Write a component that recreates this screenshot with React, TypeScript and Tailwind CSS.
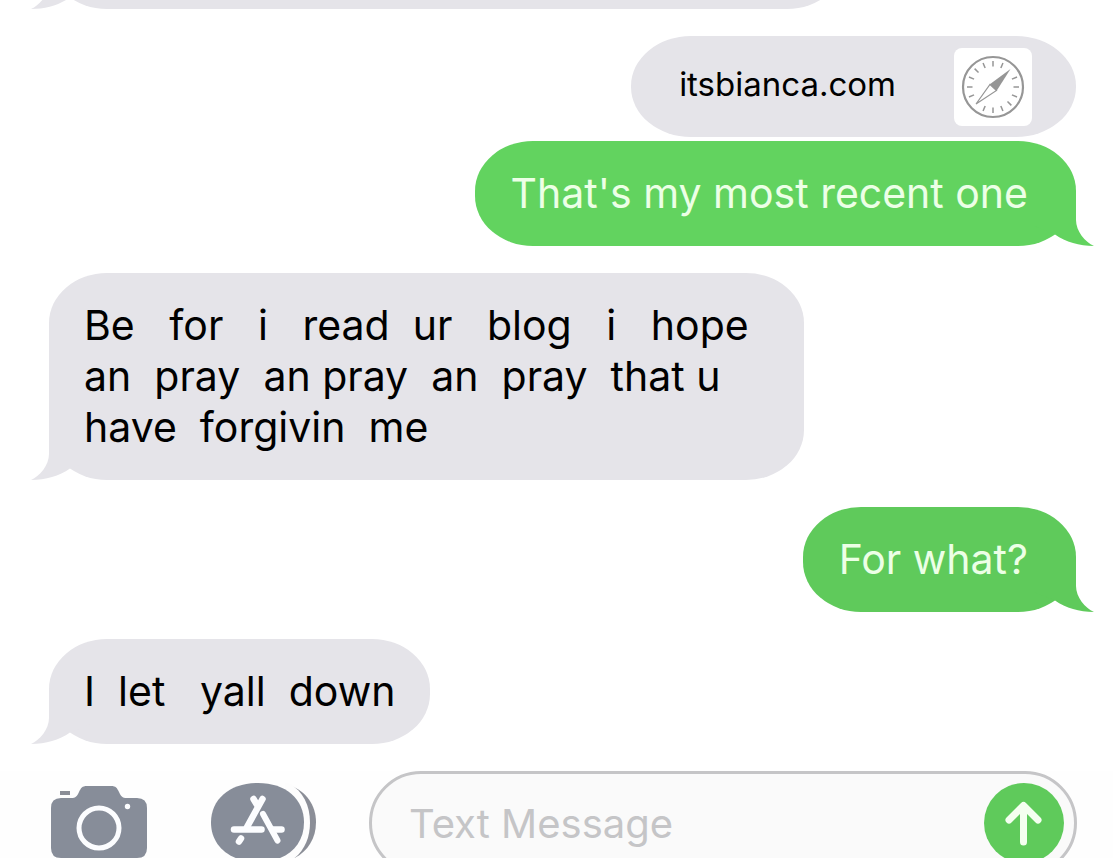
import React from 'react';

type Side = 'in' | 'out';

type BubbleProps = {
  side: Side;
  className?: string;
  children?: React.ReactNode;
};

function Tail({ side }: { side: Side }) {
  return (
    <svg
      viewBox="0 0 60 52"
      aria-hidden="true"
      className={
        side === 'in'
          ? 'absolute bottom-0 -left-[18px] h-[52px] w-[60px] fill-current'
          : 'absolute bottom-0 -right-[18px] h-[52px] w-[60px] -scale-x-100 fill-current'
      }
    >
      <path d="M18 0V26C18 37 9 48 0 52C15 52 28 48 39 40.500L60 32V0Z" />
    </svg>
  );
}

function Bubble({ side, className = '', children }: BubbleProps) {
  const tone = side === 'in' ? 'self-start text-[#e5e4e9]' : 'self-end';
  const inset = side === 'in' ? 'pr-[35px] pl-[35px]' : 'pr-12 pl-9';
  return (
    <div className={`relative ${tone} ${className}`}>
      <div className={`min-h-[105px] rounded-[58px/50px] bg-current py-[27px] ${inset}`}>
        <p
          className={
            side === 'in'
              ? 'relative z-10 text-[41px] leading-[51px] whitespace-pre text-black'
              : 'relative z-10 text-[41px] leading-[51px] whitespace-pre text-[#ecffe6]'
          }
        >
          {children}
        </p>
      </div>
      <Tail side={side} />
    </div>
  );
}

const ticks = Array.from({ length: 16 }, (_, i) => i * 22.5).filter((a) => a !== 45 && a !== 225);

function Compass() {
  return (
    <svg viewBox="-39 -39 78 78" className="size-[78px] rounded-lg bg-white" aria-hidden="true">
      <circle r="30" fill="none" stroke="#969696" strokeWidth="2.200" />
      {ticks.map((angle) => (
        <line key={angle} y1="-26" y2="-20.500" stroke="#969696" strokeWidth="1.500" transform={`rotate(${angle})`} />
      ))}
      <path d="M17.500 -18L-3.500 -2.500L3.500 4Z" fill="#969696" />
      <path d="M-17 17L-3 -2.500L3.500 3.500Z" fill="#fff" stroke="#969696" strokeWidth="1.200" />
    </svg>
  );
}

function CameraIcon() {
  return (
    <svg viewBox="0 0 96 74" className="h-[74px] w-24" aria-hidden="true">
      <rect x="9" y="5" width="10" height="4" fill="#8b8e97" />
      <path
        d="M10 12H20C25 12 26 10 28 6C30 2 31 0 36 0H60C65 0 66 2 68 6C70 10 71 12 76 12H86Q96 12 96 22V62Q96 72 86 72H10Q0 72 0 62V22Q0 12 10 12Z"
        fill="#878d99"
      />
      <circle cx="48" cy="42" r="20" fill="none" stroke="#fcfdff" strokeWidth="5" />
      <circle cx="76.500" cy="20.500" r="2.700" fill="#fcfdff" />
    </svg>
  );
}

function AppStoreIcon() {
  return (
    <svg viewBox="0 0 105 80" className="h-20 w-[105px]" aria-hidden="true">
      <path d="M79 2.500C95 8 105 22 105 39.500S95 71 79 77Z" fill="#8b8e97" />
      <path d="M74 -2C91 6 99 21 99 39.500S91 73 74 81Z" fill="#fdfdfd" />
      <path d="M47 0C75 0 93 16 93 39.500S75 79 47 79S0 63 0 39.500S19 0 47 0Z" fill="#878d99" />
      <g fill="none" stroke="#fcfdff" strokeWidth="6.500" strokeLinecap="round">
        <path d="M42.500 16L45.500 21" />
        <path d="M51.500 16L36 44" />
        <path d="M30 55.500L28 58.500" />
        <path d="M23 46.500H50.500" />
      </g>
      <path d="M51 29L67 58" fill="none" stroke="#878d99" strokeWidth="9.500" />
      <path d="M52 31L66.500 57.500" fill="none" stroke="#fcfdff" strokeWidth="6" strokeLinecap="round" />
      <path d="M62 46.500H70.500" stroke="#fcfdff" strokeWidth="6.500" strokeLinecap="round" />
    </svg>
  );
}

function ArrowUp() {
  return (
    <svg viewBox="0 0 80 80" className="size-20" aria-hidden="true">
      <path
        d="M39.500 59V23M25 37L39.500 22.500L54 37"
        fill="none"
        stroke="#f4fff0"
        strokeWidth="7"
        strokeLinecap="round"
        strokeLinejoin="round"
      />
    </svg>
  );
}

export default function App() {
  return (
    <main className="flex h-screen flex-col overflow-hidden bg-white font-[Inter,'Liberation_Sans',sans-serif]">
      <section aria-label="Conversation" className="flex shrink-0 flex-col gap-[27px] pr-[37px] pl-[49px]">
        <Bubble side="in" className="-mt-24 w-[796px]" />
        <div className="flex flex-col gap-1">
          <a
            href="https://itsbianca.com"
            className="flex h-[101px] items-center gap-[58px] self-end rounded-[60px/50px] bg-[#e5e4e9] pr-11 pl-12"
          >
            <span className="pb-1.5 text-[33px] leading-10 text-black">itsbianca.com</span>
            <Compass />
          </a>
          <Bubble side="out" className="text-[#62d35f]">That's my most recent one</Bubble>
        </div>
        <Bubble side="in" className="w-[755px]">
          {'Be   for   i   read  ur   blog   i   hope\nan  pray  an pray  an  pray  that u\nhave  forgivin  me'}
        </Bubble>
        <Bubble side="out" className="text-[#5fca5b]">For what?</Bubble>
        <Bubble side="in">{'I  let   yall  down'}</Bubble>
      </section>

      <form
        onSubmit={(e) => e.preventDefault()}
        className="mt-[27px] flex shrink-0 items-center bg-[#fefefe] pr-9 pl-[51px]"
      >
        <button type="button" aria-label="Camera" className="shrink-0">
          <CameraIcon />
        </button>
        <button type="button" aria-label="App Store" className="ml-16 shrink-0">
          <AppStoreIcon />
        </button>
        <div className="ml-[53px] flex h-[104px] min-w-0 flex-1 items-center rounded-full border-[3px] border-[#c5c5c7] bg-[#fafafa] pr-2.5 pl-[37px]">
          <input
            type="text"
            aria-label="Text Message"
            placeholder="Text Message"
            className="min-w-0 flex-1 bg-transparent text-[40px] leading-[51px] outline-none placeholder:text-[#c5c5c7]"
          />
          <button type="submit" aria-label="Send" className="shrink-0 rounded-full bg-[#5fca5b]">
            <ArrowUp />
          </button>
        </div>
      </form>
    </main>
  );
}
